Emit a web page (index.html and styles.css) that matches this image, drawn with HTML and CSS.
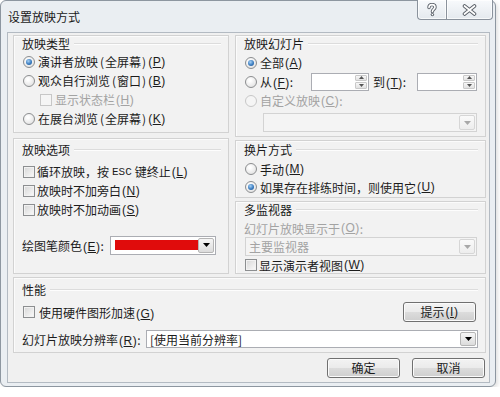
FILE: index.html
```html
<!DOCTYPE html>
<html lang="zh-CN">
<head>
<meta charset="utf-8">
<title>设置放映方式</title>
<link rel="stylesheet" href="styles.css">
</head>
<body>
<div class="window">
  <div class="titlebar">
    <span class="title">设置放映方式</span>
    <div class="caption-btns">
      <span class="cbtn help">
        <svg width="12" height="14" viewBox="0 0 12 14"><path d="M3 4.6C3 2.6 4.4 1.6 6 1.6C7.8 1.6 9 2.7 9 4.2C9 6.1 6.4 6.3 6.4 8.6" fill="none" stroke="#5b6169" stroke-width="3.4" stroke-linecap="round"/><path d="M3 4.6C3 2.6 4.4 1.6 6 1.6C7.8 1.6 9 2.7 9 4.2C9 6.1 6.4 6.3 6.4 8.6" fill="none" stroke="#fff" stroke-width="1.6" stroke-linecap="round"/><circle cx="6.4" cy="11.6" r="1.7" fill="#5b6169"/><circle cx="6.4" cy="11.6" r="0.8" fill="#fff"/></svg>
      </span>
      <span class="cbtn close">
        <svg width="15" height="12" viewBox="0 0 15 12"><path d="M2.5 2L12.5 10M12.5 2L2.5 10" stroke="#5b6169" stroke-width="3.6" stroke-linecap="round"/><path d="M2.5 2L12.5 10M12.5 2L2.5 10" stroke="#fff" stroke-width="1.7" stroke-linecap="round"/></svg>
      </span>
    </div>
  </div>

  <div class="client">
    <div class="columns">
      <div class="col col-left">
        <section class="panel p-type">
          <div class="cap">放映类型</div>
          <div class="rows">
            <div class="row"><span class="radio on"></span>演讲者放映<span class="lp">(</span>全屏幕<span class="rp">)</span><span class="mn">(<u>P</u>)</span></div>
            <div class="row"><span class="radio"></span>观众自行浏览<span class="lp">(</span>窗口<span class="rp">)</span><span class="mn">(<u>B</u>)</span></div>
            <div class="row dis"><span class="check indent dis-box"></span>显示状态栏<span class="mn">(<u>H</u>)</span></div>
            <div class="row"><span class="radio"></span>在展台浏览<span class="lp">(</span>全屏幕<span class="rp">)</span><span class="mn">(<u>K</u>)</span></div>
          </div>
        </section>

        <section class="panel p-opts">
          <div class="cap">放映选项</div>
          <div class="rows opts-rows">
            <div class="row"><span class="check"></span>循环放映，按 <span class="esc">ESC</span> 键终止<span class="mn">(<u>L</u>)</span></div>
            <div class="row"><span class="check"></span>放映时不加旁白<span class="mn">(<u>N</u>)</span></div>
            <div class="row"><span class="check"></span>放映时不加动画<span class="mn">(<u>S</u>)</span></div>
          </div>
          <div class="pen-row">
            <span class="pen-label">绘图笔颜色<span class="mn">(<u>E</u>)</span>:</span>
            <span class="color-box">
              <span class="color-fill"></span>
              <span class="arrow"><svg width="7" height="4" viewBox="0 0 7 4"><path d="M0 0H7L3.5 4Z" fill="#000"/></svg></span>
            </span>
          </div>
        </section>
      </div>

      <div class="col col-right">
        <section class="panel p-slides">
          <div class="cap">放映幻灯片</div>
          <div class="rows slides-rows">
            <div class="row"><span class="radio on"></span>全部<span class="mn">(<u>A</u>)</span></div>
            <div class="row">
              <span class="radio"></span><span class="from-label">从<span class="mn">(<u>F</u>)</span>:</span>
              <span class="spin w58"><span class="spin-btns"><span class="sb"><svg width="5" height="3" viewBox="0 0 5 3"><path d="M0 3H5L2.5 0Z" fill="#555"/></svg></span><span class="sb"><svg width="5" height="3" viewBox="0 0 5 3"><path d="M0 0H5L2.5 3Z" fill="#555"/></svg></span></span></span>
              <span class="to-label">到<span class="mn">(<u>T</u>)</span>:</span>
              <span class="spin w60"><span class="spin-btns"><span class="sb"><svg width="5" height="3" viewBox="0 0 5 3"><path d="M0 3H5L2.5 0Z" fill="#555"/></svg></span><span class="sb"><svg width="5" height="3" viewBox="0 0 5 3"><path d="M0 0H5L2.5 3Z" fill="#555"/></svg></span></span></span>
            </div>
            <div class="row dis"><span class="radio dis-box"></span>自定义放映<span class="mn">(<u>C</u>)</span>:</div>
          </div>
          <div class="combo disabled custom-combo">
            <span class="arrow"><svg width="7" height="4" viewBox="0 0 7 4"><path d="M0 0H7L3.5 4Z" fill="#a8a8a8"/></svg></span>
          </div>
        </section>

        <section class="panel p-adv">
          <div class="cap">换片方式</div>
          <div class="rows adv-rows">
            <div class="row r18"><span class="radio"></span>手动<span class="mn">(<u>M</u>)</span></div>
            <div class="row r18"><span class="radio on"></span>如果存在排练时间，则使用它<span class="mn">(<u>U</u>)</span></div>
          </div>
        </section>

        <section class="panel p-mon">
          <div class="cap">多监视器</div>
          <div class="row r18 dis mon-label">幻灯片放映显示于<span class="mn">(<u>O</u>)</span>:</div>
          <div class="combo disabled mon-combo">
            <span class="combo-text">主要监视器</span>
            <span class="arrow"><svg width="7" height="4" viewBox="0 0 7 4"><path d="M0 0H7L3.5 4Z" fill="#a8a8a8"/></svg></span>
          </div>
          <div class="row r16 mon-check"><span class="check"></span>显示演示者视图<span class="mn">(<u>W</u>)</span></div>
        </section>
      </div>
    </div>

    <section class="panel p-perf">
      <div class="cap">性能</div>
      <div class="perf-row">
        <span class="check"></span><span class="perf-text">使用硬件图形加速<span class="mn">(<u>G</u>)</span></span>
        <button class="btn tip-btn">提示<span class="mn">(<u>I</u>)</span></button>
      </div>
      <div class="res-row">
        <span class="res-label">幻灯片放映分辨率<span class="mn">(<u>R</u>)</span>:</span>
        <div class="combo res-combo">
          <span class="combo-text dark">[使用当前分辨率]</span>
          <span class="arrow"><svg width="7" height="4" viewBox="0 0 7 4"><path d="M0 0H7L3.5 4Z" fill="#000"/></svg></span>
        </div>
      </div>
    </section>

    <div class="actions">
      <button class="btn">确定</button>
      <button class="btn">取消</button>
    </div>
  </div>
</div>
</body>
</html>
```

FILE: styles.css
```css
* { box-sizing: border-box; }

body {
  margin: 0;
  background: #ffffff;
  font-family: "Noto Sans CJK SC", "Noto Sans", sans-serif;
  font-size: 12px;
  color: #1c1c1c;
}

.window {
  width: 496px;
  height: 387px;
  border: 1px solid #8d96a0;
  border-radius: 6px;
  background: #eaeef2;
  padding: 0 5px 4px 6px;
  display: flex;
  flex-direction: column;
  box-shadow: 2px 2px 4px rgba(0, 0, 0, 0.12);
}

.titlebar {
  height: 31px;
  display: flex;
  align-items: flex-start;
  flex: none;
}

.title {
  padding: 8px 0 0 1px;
  line-height: 16px;
  font-size: 12px;
  color: #1a1a1a;
}

.caption-btns {
  margin-left: auto;
  margin-top: -1px;
  margin-right: -3px;
  display: flex;
}

.cbtn {
  height: 20px;
  border: 1px solid #8a929c;
  border-top: none;
  background: linear-gradient(#f8fafc, #e4e9ee);
  display: flex;
  align-items: center;
  justify-content: center;
  box-shadow: inset 0 0 0 1px rgba(255, 255, 255, 0.7);
}

.help {
  width: 29px;
  border-right: none;
  border-radius: 0 0 0 4px;
}

.close {
  width: 47px;
  border-radius: 0 0 4px 0;
}

.client {
  flex: 1;
  background: #f0f0f0;
  border: 1px solid #b3bac2;
  padding: 2px 3px 4px 5px;
  display: flex;
  flex-direction: column;
}

.columns {
  display: flex;
  gap: 6px;
}

.col {
  display: flex;
  flex-direction: column;
}

.col-left { width: 216px; gap: 5px; }
.col-right { width: 251px; gap: 3px; }

.panel {
  border: 1px solid #d2d2d2;
  box-shadow: inset 1px 1px 0 #fbfbfb;
  background: #f2f2f2;
  padding: 0 7px 0 8px;
  display: flex;
  flex-direction: column;
  flex: none;
}

.p-type { height: 98px; }
.p-opts { height: 136px; padding-top: 3px; }
.p-slides { height: 102px; }
.p-adv { height: 58px; padding-top: 1px; }
.p-mon { height: 73px; }
.p-perf { height: 76px; margin-top: 3px; padding-top: 4px; }

.cap {
  height: 16px;
  line-height: 16px;
  display: flex;
  align-items: center;
  gap: 4px;
  white-space: nowrap;
  color: #1a1a1a;
}

.cap::after {
  content: "";
  flex: 1;
  height: 0;
  border-top: 1px solid #dcdcdc;
  border-bottom: 1px solid #fdfdfd;
}

.rows { display: flex; flex-direction: column; }
.opts-rows { margin-top: 4px; }
.slides-rows { margin-top: 1px; }
.adv-rows { margin-top: 2px; }

.row {
  display: flex;
  align-items: center;
  height: 19px;
  white-space: nowrap;
}

.row.r18 { height: 18px; }
.row.r16 { height: 16px; }

.dis { color: #a3a3a3; }

.lp { margin: 0 1px 0 2px; }
.rp { margin: 0 1px 0 1px; }

.mn {
  font-family: "Liberation Sans", sans-serif;
  font-size: 12px;
  margin-left: 1px;
  letter-spacing: 0.5px;
}

.esc {
  font-family: "Liberation Mono", monospace;
  font-size: 11px;
  margin: 0 3px;
}

.radio {
  width: 12px;
  height: 12px;
  border-radius: 50%;
  border: 1px solid #8c8e90;
  background: radial-gradient(circle at 40% 35%, #ffffff 10%, #dedede 90%);
  margin: 0 3px 0 1px;
  flex: none;
  display: flex;
  align-items: center;
  justify-content: center;
}

.radio.on::after {
  content: "";
  width: 6px;
  height: 6px;
  border-radius: 50%;
  background: radial-gradient(circle at 40% 35%, #a8d2f5 0%, #3a7cc0 55%, #1c4f88 100%);
}

.check {
  width: 12px;
  height: 12px;
  border: 1px solid #8c8e90;
  background: linear-gradient(135deg, #d6d6d6, #fbfbfb);
  box-shadow: inset 0 0 0 1px #f2f2f2;
  flex: none;
  margin: 0 2px 0 1px;
}

.radio.dis-box,
.check.dis-box {
  border-color: #c7c7c7;
  background: #f5f5f5;
  box-shadow: none;
}

.check.indent { margin: 0 3px 0 18px; }

.pen-row {
  margin-top: 16px;
  height: 20px;
  display: flex;
  align-items: center;
}

.pen-label {
  width: 88px;
  white-space: nowrap;
}

.color-box {
  width: 106px;
  height: 19px;
  border: 1px solid #abadb3;
  background: #ffffff;
  display: flex;
  align-items: center;
  padding: 0 1px 0 4px;
}

.color-fill {
  width: 83px;
  height: 10px;
  background: #e00c0c;
}

.arrow {
  margin-left: auto;
  width: 16px;
  height: 15px;
  border: 1px solid #b5b5b5;
  border-radius: 2px;
  background: linear-gradient(#f6f6f6, #dcdcdc);
  display: flex;
  align-items: center;
  justify-content: center;
  flex: none;
}

.from-label { width: 51px; }
.to-label { width: 44px; margin-left: 4px; }

.spin {
  height: 18px;
  border: 1px solid #abadb3;
  background: #ffffff;
  display: flex;
  justify-content: flex-end;
  flex: none;
}

.spin.w58 { width: 58px; }
.spin.w60 { width: 60px; }

.spin-btns {
  width: 14px;
  display: flex;
  flex-direction: column;
  padding: 1px;
  gap: 1px;
}

.sb {
  flex: 1;
  border: 1px solid #c9c9c9;
  border-radius: 1px;
  background: linear-gradient(#f7f7f7, #e2e2e2);
  display: flex;
  align-items: center;
  justify-content: center;
}

.combo {
  height: 19px;
  border: 1px solid #abadb3;
  background: #ffffff;
  display: flex;
  align-items: center;
  padding: 0 1px 0 3px;
  flex: none;
}

.combo .arrow { height: 15px; }

.combo.disabled {
  background: #f4f4f4;
  border-color: #d3d3d3;
}

.combo.disabled .arrow {
  border-color: #d6d6d6;
  background: linear-gradient(#fafafa, #ededed);
}

.combo-text { color: #a3a3a3; white-space: nowrap; }
.combo-text.dark { color: #1c1c1c; }

.custom-combo {
  margin: 3px 0 0 19px;
  width: 214px;
}

.mon-label { margin-top: 1px; }

.mon-combo {
  margin-left: 1px;
  width: 232px;
}

.mon-check { margin-top: 1px; }

.perf-row {
  margin-top: 4px;
  height: 20px;
  display: flex;
  align-items: center;
}

.perf-row .check { margin-right: 4px; }

.perf-text { white-space: nowrap; }

.btn {
  font-family: "Noto Sans CJK SC", "Noto Sans", sans-serif;
  font-size: 12px;
  color: #1c1c1c;
  width: 73px;
  height: 20px;
  padding: 0;
  border: 1px solid #707070;
  border-radius: 3px;
  background: linear-gradient(#f3f3f3 0%, #ebebeb 48%, #dcdcdc 52%, #cfcfcf 100%);
  box-shadow: inset 0 0 0 1px #fbfbfb;
  display: flex;
  align-items: center;
  justify-content: center;
  line-height: 16px;
}

.tip-btn {
  margin-left: auto;
  margin-right: 2px;
}

.res-row {
  margin-top: 8px;
  height: 18px;
  display: flex;
  align-items: center;
}

.res-label {
  width: 124px;
  white-space: nowrap;
  flex: none;
}

.res-combo {
  flex: 1;
  height: 18px;
}

.res-combo .arrow { height: 14px; }

.actions {
  margin-top: 5px;
  display: flex;
  justify-content: flex-end;
  gap: 12px;
  padding-right: 1px;
}
```
